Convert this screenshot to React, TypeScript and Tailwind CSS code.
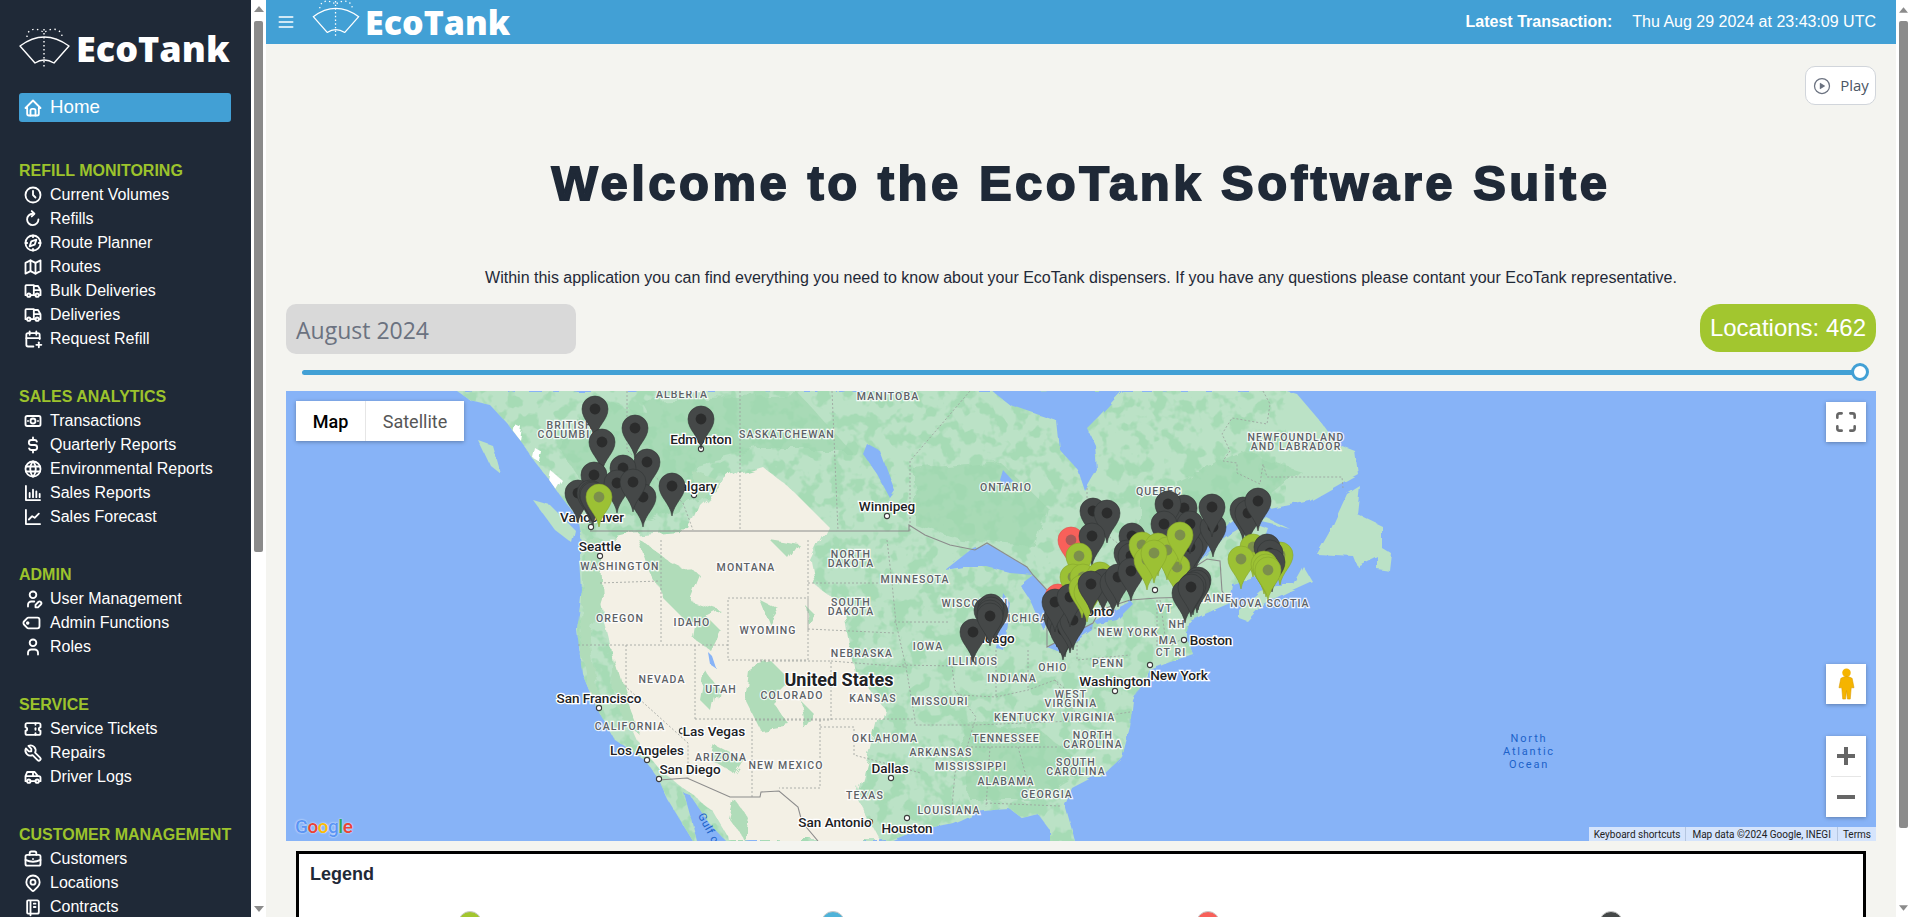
import React from 'react';
import {
  TbHome, TbClock, TbCompass, TbMap, TbTruck, TbCalendarPlus, TbCashBanknote,
  TbCurrencyDollar, TbWorld, TbUserEdit, TbTag, TbUser, TbTicket,
  TbTool, TbCar, TbBriefcase, TbMapPin, TbNotebook, TbMenu2, TbMaximize,
} from 'react-icons/tb';
import { IoPlayCircleOutline } from 'react-icons/io5';

type IconProps = { size?: number; strokeWidth?: number; className?: string };

const StrokeIcon = ({ size = 20, strokeWidth = 2, className, children }: IconProps & { children: React.ReactNode }) => (
  <svg
    viewBox="0 0 24 24"
    width={size}
    height={size}
    fill="none"
    stroke="currentColor"
    strokeWidth={strokeWidth}
    strokeLinecap="round"
    strokeLinejoin="round"
    className={className}
  >
    {children}
  </svg>
);

const RefillIcon = (props: IconProps) => (
  <StrokeIcon {...props}>
    <path d="M18.5 12.5a6.8 6.8 0 1 1-7-6.8" />
    <path d="M10.5 2.5l3.2 3.2-3.2 3.2" />
  </StrokeIcon>
);

const BarsIcon = (props: IconProps) => (
  <StrokeIcon {...props}>
    <path d="M3.5 3.5v17h17" />
    <path d="M8 17v-5M12 17V8M16 17v-7M20 17v-4" />
  </StrokeIcon>
);

const ForecastIcon = (props: IconProps) => (
  <StrokeIcon {...props}>
    <path d="M3.5 3.5v17h17" />
    <path d="M7 15l4-4 3 2 5-5" />
  </StrokeIcon>
);

const TagRightIcon = ({ className, ...props }: IconProps) => (
  <TbTag {...props} className={`-rotate-45 ${className ?? ''}`} />
);

const sections = [
  {
    title: 'REFILL MONITORING',
    items: [
      { label: 'Current Volumes', icon: TbClock },
      { label: 'Refills', icon: RefillIcon },
      { label: 'Route Planner', icon: TbCompass },
      { label: 'Routes', icon: TbMap },
      { label: 'Bulk Deliveries', icon: TbTruck },
      { label: 'Deliveries', icon: TbTruck },
      { label: 'Request Refill', icon: TbCalendarPlus },
    ],
  },
  {
    title: 'SALES ANALYTICS',
    items: [
      { label: 'Transactions', icon: TbCashBanknote },
      { label: 'Quarterly Reports', icon: TbCurrencyDollar },
      { label: 'Environmental Reports', icon: TbWorld },
      { label: 'Sales Reports', icon: BarsIcon },
      { label: 'Sales Forecast', icon: ForecastIcon },
    ],
  },
  {
    title: 'ADMIN',
    items: [
      { label: 'User Management', icon: TbUserEdit },
      { label: 'Admin Functions', icon: TagRightIcon },
      { label: 'Roles', icon: TbUser },
    ],
  },
  {
    title: 'SERVICE',
    items: [
      { label: 'Service Tickets', icon: TbTicket },
      { label: 'Repairs', icon: TbTool },
      { label: 'Driver Logs', icon: TbCar },
    ],
  },
  {
    title: 'CUSTOMER MANAGEMENT',
    items: [
      { label: 'Customers', icon: TbBriefcase },
      { label: 'Locations', icon: TbMapPin },
      { label: 'Contracts', icon: TbNotebook },
    ],
  },
];

// all map data is in page pixels, the svg viewBox starts at the map's corner
const LAND =
  'M457,391 L470,400 L490,405 L507,423 L520,440 L535,462 L547,477 L560,495 L577,517 L582,543 L580,560 L582,590 L577,630 L582,673 L596,707 L615,740 L645,760 L659,780 L668,800 L693,841 L697,841 L690,815 L684,793 L690,795 L709,823 L726,841 L890,841 L905,835 L918,830 L953,823 L960,820 L977,812 L993,810 L1010,809 L1022,818 L1038,814 L1050,830 L1050,841 L1075,841 L1072,830 L1065,805 L1072,788 L1093,777 L1101,777 L1122,757 L1130,727 L1133,700 L1150,670 L1170,662 L1193,654 L1187,640 L1187,631 L1190,621 L1207,613 L1230,603 L1233,585 L1262,575 L1275,560 L1262,545 L1268,528 L1250,522 L1225,537 L1190,570 L1185,575 L1220,530 L1250,510 L1270,509 L1310,501 L1340,484 L1358,474 L1355,451 L1337,444 L1320,421 L1297,394 L1287,391 Z';

const islands = [
  '1239,618 1247,621 1263,604 1290,591 1312,581 1303,566 1293,584 1283,584 1260,591 1239,610',
  '1360,486 1347,494 1330,531 1317,554 1353,556 1357,566 1377,556 1377,569 1390,571 1392,554 1382,548 1382,526 1357,514',
  '1267,518 1290,529 1275,525 1262,522',
  '533,500 550,505 575,530 572,543 555,530',
  '478,440 492,445 500,473 490,465',
];

const lakes = [
  '992,391 1010,405 1057,421 1060,450 1078,470 1085,491 1097,470 1095,445 1087,428 1100,415 1122,391',
  '867,444 880,451 895,491 890,498 877,474 863,454',
  '945,570 973,548 987,543 1027,567 1033,575 1010,573 987,567 963,567',
  '1003,593 1010,603 1003,650 995,647 1000,620',
  '1033,575 1047,590 1047,617 1043,630 1030,600 1020,585',
  '1047,647 1093,623 1092,630 1060,652',
  '1093,620 1130,600 1133,604 1117,620 1097,624',
  '708,652 712,656 716,668 710,664',
  '1003,470 1012,480 1006,488 1000,480',
];

const midGreen = [
  'M915,470 L1000,462 L1045,505 L1035,545 L960,540 L915,525 Z',
  'M590,400 L690,420 L700,500 L650,520 L600,510 L560,450 Z',
  'M640,400 L800,395 L850,450 L760,450 L680,470 Z',
  'M1140,500 L1240,450 L1300,470 L1250,510 L1180,560 L1140,560 Z',
  'M960,720 L1040,730 L1090,770 L1040,800 L970,800 Z',
];

const beige =
  'M590,545 L630,535 L690,530 L700,505 L737,471 L760,464 L793,491 L827,525 L810,560 L815,585 L845,607 L850,640 L856,673 L883,707 L870,757 L858,800 L880,841 L730,841 L712,810 L686,790 L660,770 L640,745 L620,700 L610,640 L600,600 Z';

const beigePatches = [
  '585,540 600,540 603,600 590,640 600,700 588,690 580,640',
  '640,540 668,560 700,575 690,600 720,610 690,625 665,600 650,570',
  '750,665 770,660 790,680 770,700 790,725 760,730 745,700',
  '700,610 720,630 710,650 695,640',
  '705,670 720,690 715,715 700,700',
  '715,745 745,760 735,775 710,760',
  '615,660 630,710 640,735 622,720 610,680',
  '805,605 815,615 808,625',
  '735,800 750,820 745,841 730,820',
  '770,540 800,545 790,560',
  '760,600 780,610 770,625',
  '800,700 815,715 805,730',
  '690,470 720,480 700,500',
];

const countryLines = [
  '590,531 909,531 909,525 925,535 950,545 975,550 987,543 1027,567 1033,575 1047,590 1047,617 1047,647 1093,623 1100,610 1130,600 1157,598 1193,597 1193,568 1207,559 1220,561 1222,591 1230,601',
  '659,780 687,778 730,797 760,797 761,792 779,791 798,807 802,822 818,841',
];

const stateLines = [
  '600,583 660,581', '578,645 728,645', '661,540 661,643', '728,598 808,598 808,660 728,660 728,598',
  '808,540 808,630', '808,583 892,583', '808,629 894,633', '831,661 906,667', '695,645 695,720',
  '752,661 831,661 831,720 752,720 752,797', '820,720 820,788 779,788', '695,719 915,719',
  '820,727 854,727 854,755 921,773', '626,645 626,687 688,743 688,778', '894,622 950,622', '902,665 952,666',
  '887,540 892,583 896,623 906,667 915,720 915,725 975,725 1100,720', '967,747 1059,747',
  '952,666 955,690 976,717 967,747 955,773 952,807', '996,650 996,697', '1028,650 1028,690', '990,747 986,807',
  '1018,747 1032,797', '986,803 1060,806', '960,695 996,697 1028,690 1055,680 1090,710',
  '1077,633 1077,660 1130,655', '1090,628 1150,628', '1160,600 1165,635', '1157,600 1157,655 1180,640',
  '740,391 740,531', '832,391 838,531', '910,531 910,461 970,391', '627,391 627,450 683,503 693,530', '1087,488 1087,520 1140,560',
  '1263,391 1270,404 1267,424 1232,418 1222,434 1230,451 1223,461 1237,463 1237,473 1260,484 1263,464 1267,477 1342,477 1343,488',
  '1100,740 1060,747', '1055,680 1080,720 1130,712',
];

type MapLabel = [string, number, number];

const regionLabels: MapLabel[] = [
  ['ALBERTA', 682, 398], ['MANITOBA', 888, 400], ['SASKATCHEWAN', 787, 438], ['ONTARIO', 1006, 491], ['QUEBEC', 1159, 495],
  ['NEWFOUNDLAND', 1296, 441], ['AND LABRADOR', 1296, 450], ['NOVA SCOTIA', 1270, 607], ['MAINE', 1213, 602], ['VT', 1165, 612],
  ['NH', 1177, 628], ['MA', 1168, 644], ['CT RI', 1171, 656], ['NEW YORK', 1128, 636], ['PENN', 1108, 667], ['OHIO', 1053, 671],
  ['INDIANA', 1012, 682], ['ILLINOIS', 973, 665], ['IOWA', 928, 650], ['WISCONSIN', 975, 607], ['MICHIGAN', 1027, 622],
  ['MINNESOTA', 915, 583], ['NORTH', 851, 558], ['DAKOTA', 851, 567], ['SOUTH', 851, 606], ['DAKOTA', 851, 615],
  ['NEBRASKA', 862, 657], ['KANSAS', 873, 702], ['MISSOURI', 940, 705], ['OKLAHOMA', 885, 742], ['ARKANSAS', 941, 756],
  ['MISSISSIPPI', 971, 770], ['TENNESSEE', 1006, 742], ['KENTUCKY', 1025, 721], ['WEST', 1071, 698], ['VIRGINIA', 1071, 707],
  ['VIRGINIA', 1089, 721], ['NORTH', 1093, 739], ['CAROLINA', 1093, 748], ['SOUTH', 1076, 766], ['CAROLINA', 1076, 775],
  ['GEORGIA', 1047, 798], ['ALABAMA', 1006, 785], ['LOUISIANA', 949, 814], ['TEXAS', 865, 799], ['NEW MEXICO', 786, 769],
  ['ARIZONA', 721, 761], ['UTAH', 721, 693], ['COLORADO', 792, 699], ['WYOMING', 768, 634], ['IDAHO', 692, 626],
  ['MONTANA', 746, 571], ['NEVADA', 662, 683], ['OREGON', 620, 622], ['WASHINGTON', 620, 570], ['CALIFORNIA', 630, 730],
  ['BRITISH', 570, 429], ['COLUMBIA', 568, 438],
];

const cityLabels: MapLabel[] = [
  ['Seattle', 600, 551], ['Vancouver', 592, 522], ['Edmonton', 701, 444], ['Calgary', 694, 491], ['Winnipeg', 887, 511],
  ['Toronto', 1090, 616], ['Chicago', 990, 643], ['Boston', 1211, 645], ['New York', 1179, 680], ['Washington', 1115, 686],
  ['San Francisco', 599, 703], ['Las Vegas', 714, 736], ['Los Angeles', 647, 755], ['San Diego', 690, 774], ['Dallas', 890, 773],
  ['San Antonio', 835, 827], ['Houston', 907, 833],
];

const cityDots = [
  [600, 556], [591, 527], [701, 449], [694, 495], [887, 516], [1184, 640], [1150, 665], [1115, 691], [1155, 590], [599, 708],
  [682, 731], [647, 760], [659, 779], [891, 778], [870, 822], [907, 818],
];

const pinColors = {
  d: { body: '#454848', hole: '#2b2c2c', line: '#333535' },
  g: { body: '#9cc134', hole: '#7c8f4c', line: '#86a62c' },
  r: { body: '#f8605a', hole: '#a85a58', line: '#e0514c' },
};

type PinKind = keyof typeof pinColors;

// x, y of the dot in the pin's head
const pins: [PinKind, number, number][] = [
  ['d', 595, 409], ['d', 635, 428], ['d', 701, 419], ['d', 602, 442], ['d', 647, 462], ['d', 594, 475], ['d', 623, 468],
  ['d', 617, 483], ['d', 643, 497], ['d', 633, 482], ['d', 672, 486], ['d', 578, 493], ['d', 590, 493], ['d', 592, 494],
  ['d', 593, 495], ['g', 599, 497],
  ['d', 973, 632], ['d', 987, 610], ['d', 995, 612], ['d', 991, 607], ['d', 991, 610], ['d', 990, 613], ['d', 990, 616],
  ['r', 1071, 540], ['d', 1093, 511], ['d', 1107, 513], ['d', 1092, 536], ['r', 1058, 597], ['g', 1079, 556], ['g', 1073, 577],
  ['g', 1083, 577], ['g', 1100, 575], ['d', 1057, 617], ['d', 1060, 623], ['d', 1065, 627], ['d', 1063, 630], ['d', 1070, 623],
  ['d', 1073, 620], ['d', 1055, 602], ['d', 1070, 597], ['g', 1082, 588], ['g', 1087, 592], ['d', 1103, 582], ['d', 1091, 584],
  ['d', 1132, 536], ['d', 1127, 553], ['d', 1113, 583], ['d', 1118, 577], ['d', 1131, 556], ['d', 1131, 571],
  ['d', 1184, 508], ['d', 1168, 504], ['d', 1195, 542], ['d', 1190, 547], ['d', 1190, 524], ['d', 1164, 524], ['d', 1213, 527],
  ['d', 1212, 507], ['g', 1142, 545], ['g', 1177, 567], ['g', 1158, 546], ['g', 1167, 550], ['g', 1147, 560], ['g', 1154, 553],
  ['g', 1180, 535], ['d', 1198, 580], ['d', 1197, 583], ['d', 1193, 585], ['d', 1185, 593], ['d', 1191, 587],
  ['d', 1243, 510], ['d', 1248, 513], ['d', 1258, 501], ['g', 1253, 547], ['g', 1280, 555], ['d', 1267, 547], ['d', 1270, 553],
  ['g', 1241, 559], ['d', 1272, 562], ['g', 1264, 564], ['g', 1266, 567], ['g', 1268, 570],
];

const Logo = ({ className }: { className: string }) => (
  <svg viewBox="19 28 51 41" className={className} fill="none" stroke="white">
    <path d="M20,46 Q44,28 69,46 L54,63 Q44,57 35,63 Z" strokeWidth="1.4" strokeLinejoin="round" />
    <path d="M44,29 L44,69" strokeWidth="1.4" strokeDasharray="1.6 2.4" />
    <path d="M27,37 C27,28 38,27 44,33 C50,27 62,28 62,37" strokeWidth="1.4" strokeDasharray="1.4 3.4" />
  </svg>
);

const ScrollArrow = ({ down = false }: { down?: boolean }) => (
  <svg viewBox="0 0 10 6" className="w-[10px] h-[6px]" fill="#8b8b8b">
    <path d={down ? 'M0,0 L10,0 L5,6 Z' : 'M5,0 L10,6 L0,6 Z'} />
  </svg>
);

const MapCanvas = () => (
  <svg viewBox="286 391 1590 450" className="absolute inset-0 w-full h-full">
    <defs>
      <filter id="noisePatch" x="0" y="0" width="100%" height="100%">
        <feTurbulence type="fractalNoise" baseFrequency="0.065" numOctaves="3" seed="4" result="n" />
        <feColorMatrix in="n" type="matrix" values="0 0 0 0 0  0 0 0 0 0  0 0 0 0 0  0 0 0 9 -4.4" result="m" />
        <feComposite in="SourceGraphic" in2="m" operator="in" />
      </filter>
      <filter id="wobble" x="-5%" y="-5%" width="110%" height="110%">
        <feTurbulence type="fractalNoise" baseFrequency="0.05" numOctaves="3" seed="7" result="n" />
        <feDisplacementMap in="SourceGraphic" in2="n" scale="14" />
      </filter>
      <filter id="wobbleSmall" x="-5%" y="-5%" width="110%" height="110%">
        <feTurbulence type="fractalNoise" baseFrequency="0.08" numOctaves="2" seed="3" result="n" />
        <feDisplacementMap in="SourceGraphic" in2="n" scale="5" />
      </filter>
      <clipPath id="landClip">
        <path d={LAND} />
      </clipPath>
    </defs>
    <rect x="286" y="391" width="1590" height="450" fill="#87b3f7" />
    <g fill="#bbe2c6" filter="url(#wobbleSmall)">
      <path d={LAND} />
      {islands.map((p) => (
        <polygon key={p} points={p} />
      ))}
    </g>
    <g clipPath="url(#landClip)">
      <rect x="286" y="391" width="1000" height="450" fill="#a6dbb5" filter="url(#noisePatch)" />
      <g fill="#a0d7af" filter="url(#wobble)" opacity="0.7">
        {midGreen.map((d) => (
          <path key={d} d={d} />
        ))}
      </g>
      <path d={beige} fill="#f3f0e5" filter="url(#wobble)" />
      <g fill="#b0dcb9" filter="url(#wobble)">
        {beigePatches.map((p) => (
          <polygon key={p} points={p} />
        ))}
      </g>
      <g fill="#ffffff" filter="url(#wobbleSmall)">
        <polygon points="515,425 522,428 520,440 513,434" />
        <polygon points="535,448 542,452 540,462 533,458" />
        <polygon points="550,470 562,480 556,490 548,480" />
      </g>
    </g>
    <g fill="#87b3f7" filter="url(#wobbleSmall)">
      {lakes.map((p) => (
        <polygon key={p} points={p} />
      ))}
    </g>
    <g fill="none" stroke="#9a9f9c" strokeWidth="0.8" strokeDasharray="2 2">
      {stateLines.map((p) => (
        <polyline key={p} points={p} />
      ))}
    </g>
    <g fill="none" stroke="#8c8c8c" strokeWidth="1.1">
      {countryLines.map((p) => (
        <polyline key={p} points={p} />
      ))}
    </g>
    <g
      fontFamily="Roboto, sans-serif"
      fontSize="10.5"
      fontWeight="500"
      letterSpacing="1.1"
      textAnchor="middle"
      fill="#5c6166"
      stroke="#ffffff"
      strokeOpacity="0.85"
      strokeWidth="2.4"
      className="[paint-order:stroke]"
    >
      {regionLabels.map(([t, x, y], i) => (
        <text key={i} x={x} y={y}>{t}</text>
      ))}
    </g>
    <g fill="#ffffff" stroke="#3c3c3c" strokeWidth="1.1">
      {cityDots.map(([x, y]) => (
        <circle key={`${x}-${y}`} cx={x} cy={y} r="2.6" />
      ))}
    </g>
    <g
      fontFamily="Roboto, sans-serif"
      fontSize="13.5"
      fontWeight="500"
      textAnchor="middle"
      fill="#202124"
      stroke="#ffffff"
      strokeWidth="2.6"
      className="[paint-order:stroke]"
    >
      {cityLabels.map(([t, x, y]) => (
        <text key={t} x={x} y={y}>{t}</text>
      ))}
      <text x="839" y="686" fontSize="18" fontWeight="700">United States</text>
    </g>
    <g fontFamily="Roboto, sans-serif" fontSize="11" letterSpacing="1.8" textAnchor="middle" fill="#1c62c9">
      <text x="1529" y="742">North</text>
      <text x="1529" y="755">Atlantic</text>
      <text x="1529" y="768">Ocean</text>
      <text x="710" y="834" transform="rotate(62 710 830)" letterSpacing="0.6">Gulf of</text>
    </g>
    {pins.map(([kind, x, y], i) => {
      const c = pinColors[kind];
      const tip = y + 30;
      return (
        <g key={i}>
          <path
            d={`M${x},${tip} C${x - 2},${tip - 13} ${x - 13},${tip - 19} ${x - 13},${y} A13,13 0 1 1 ${x + 13},${y} C${x + 13},${tip - 19} ${x + 2},${tip - 13} ${x},${tip} Z`}
            fill={c.body}
            stroke={c.line}
            strokeWidth="0.6"
          />
          <circle cx={x} cy={y} r="5.4" fill={c.hole} />
        </g>
      );
    })}
  </svg>
);

const MapPanel = () => (
  <div className="relative h-[450px] mt-[10px] overflow-hidden bg-[#87b3f7] font-['Roboto',sans-serif]">
    <MapCanvas />
    <div className="absolute left-[10px] top-[10px] flex h-10 w-[168px] bg-white text-[18px] shadow-[0_1px_4px_rgba(0,0,0,0.3)]">
      <div className="flex w-[70px] items-center justify-center font-medium text-black border-r border-[#e6e6e6]">Map</div>
      <div className="flex flex-1 items-center justify-center text-[#565656]">Satellite</div>
    </div>
    <div className="absolute right-[10px] top-[11px] flex h-10 w-10 items-center justify-center bg-white shadow-[0_1px_4px_rgba(0,0,0,0.3)]">
      <TbMaximize size={26} color="#666666" strokeWidth={2.4} />
    </div>
    <div className="absolute right-[10px] top-[273px] flex h-10 w-10 items-center justify-center bg-white shadow-[0_1px_4px_rgba(0,0,0,0.3)]">
      <svg viewBox="0 0 20 34" className="h-[32px] w-[19px]">
        <circle cx="10" cy="5" r="4.5" fill="#f5b400" />
        <path d="M4,11 Q10,7 16,11 L18,21 L15,21 L14,33 L11,33 L10,24 L9,33 L6,33 L5,21 L2,21 Z" fill="#f5b400" stroke="#d99a00" strokeWidth="0.6" />
      </svg>
    </div>
    <div className="absolute right-[10px] top-[345px] flex w-10 flex-col items-center bg-white shadow-[0_1px_4px_rgba(0,0,0,0.3)]">
      <div className="relative h-10 w-10">
        <span className="absolute left-[11px] top-[18px] h-1 w-[18px] bg-[#666666]" />
        <span className="absolute left-[18px] top-[11px] h-[18px] w-1 bg-[#666666]" />
      </div>
      <div className="h-px w-[30px] bg-[#e6e6e6]" />
      <div className="relative h-10 w-10">
        <span className="absolute left-[11px] top-[18px] h-1 w-[18px] bg-[#666666]" />
      </div>
    </div>
    <div className="absolute left-[9px] bottom-[4px] text-[19px] leading-[20px] font-medium tracking-[-0.5px] [text-shadow:0_0_2px_white]">
      <span className="text-[#5a95f5]">G</span>
      <span className="text-[#ea4335]">o</span>
      <span className="text-[#fbbc05]">o</span>
      <span className="text-[#5a95f5]">g</span>
      <span className="text-[#34a853]">l</span>
      <span className="text-[#ea4335]">e</span>
    </div>
    <div className="absolute right-0 bottom-0 flex h-[14px] items-center bg-white/65 text-[10px] text-[#222222]">
      <span className="px-[5px] border-r border-[#b5c6e0]">Keyboard shortcuts</span>
      <span className="px-[6px] border-r border-[#b5c6e0]">Map data ©2024 Google, INEGI</span>
      <span className="px-[5px]">Terms</span>
    </div>
  </div>
);

const App = () => {
  return (
    <div className="flex h-screen overflow-hidden bg-white font-['Liberation_Sans',Arial,sans-serif]">
      <aside className="w-[251px] shrink-0 overflow-hidden bg-[#1f2937] pl-[19px] pr-[20px] pt-[28px] text-white">
        <div className="flex h-[41px] items-center gap-[6px]">
          <Logo className="h-[41px] w-[51px] shrink-0" />
          <span className="font-['Open_Sans',sans-serif] text-[36px] leading-none font-extrabold whitespace-nowrap">EcoTank</span>
        </div>
        <div className="mt-[24px] flex h-[29px] items-center rounded-[3px] bg-[#42a0d5] pl-[4px] text-[18.72px]">
          <TbHome size={20} strokeWidth={2.2} className="mr-[7px]" />
          Home
        </div>
        <div className="mt-[37px]">
          {sections.map((section) => (
            <div key={section.title} className="mb-[34px]">
              <div className="h-6 text-[16px] leading-6 font-bold whitespace-nowrap text-[#9cc32c]">{section.title}</div>
              {section.items.map(({ label, icon: Icon }) => (
                <div key={label} className="flex h-6 items-center pl-[4px] text-[16px]">
                  <Icon size={20} strokeWidth={2.2} className="mr-[7px] shrink-0" />
                  {label}
                </div>
              ))}
            </div>
          ))}
        </div>
      </aside>
      <div className="flex w-[15px] shrink-0 flex-col items-center bg-white pt-[6px]">
        <ScrollArrow />
        <div className="mt-[9px] h-[531px] w-[9px] rounded-[2px] bg-[#8b8b8b]" />
        <div className="flex-1" />
        <div className="mb-[5px]">
          <ScrollArrow down />
        </div>
      </div>

      <main className="min-w-0 flex-1 bg-[#f4f4f0]">
        <header className="flex h-11 items-center bg-[#42a0d5] pr-5 pl-[10px] text-[16px] text-white">
          <TbMenu2 size={20} strokeWidth={2} />
          <Logo className="ml-[16px] h-[38px] w-[48px] self-start" />
          <span className="ml-[5px] font-['Open_Sans',sans-serif] text-[34px] leading-none font-extrabold">EcoTank</span>
          <span className="ml-auto font-bold">Latest Transaction:</span>
          <span className="ml-5">Thu Aug 29 2024 at 23:43:09 UTC</span>
        </header>

        <section className="px-5 pt-[22px]">
          <div className="flex justify-end">
            <button className="flex h-[39px] w-[71px] items-center justify-center gap-[8px] rounded-[10px] border border-[#d1d5db] bg-white font-['Open_Sans',sans-serif] text-[15px] text-[#4b5563]">
              <IoPlayCircleOutline size={20} className="text-[#6b7280]" />
              Play
            </button>
          </div>
          <h1 className="mt-[49px] text-center text-[49px] leading-[58px] font-bold tracking-[3.5px] text-[#1f2937] [-webkit-text-stroke:1.8px_#1f2937]">
            Welcome to the EcoTank Software Suite
          </h1>
          <p className="mt-[54px] text-center text-[16px] leading-6 text-[#1f2937]">
            Within this application you can find everything you need to know about your EcoTank dispensers. If you have any questions please contant your EcoTank representative.
          </p>
          <div className="mt-[14px] flex h-[50px] items-start justify-between">
            <div className="flex h-[50px] w-[290px] items-center rounded-[10px] bg-[#d9d9d9] pl-[10px] pt-[2px] font-['Open_Sans',sans-serif] text-[23px] text-[#6b7280]">
              August 2024
            </div>
            <div className="flex h-[48px] items-center rounded-[20px] bg-[#a2c62f] px-[10px] text-[24px] text-white">
              Locations: 462
            </div>
          </div>
          <div className="mt-[9px] flex h-[18px] items-center pl-4 pr-[7px]">
            <div className="h-[5px] flex-1 rounded-l-full bg-[#42a0d5]" />
            <div className="-ml-px h-[18px] w-[18px] shrink-0 rounded-full border-[3px] border-[#42a0d5] bg-white" />
          </div>
          <MapPanel />
          <div className="mx-[10px] mt-[10px] h-[120px] border-[3px] border-black bg-white pl-[11px] pt-[8px]">
            <div className="text-[18px] leading-[24px] font-bold text-[#1f2937]">Legend</div>
            <div className="relative mt-[25px] h-6">
              <span className="absolute left-[148px] top-0 h-6 w-6 rounded-full border border-[#c9c9c9] bg-[#a2c62f]" />
              <span className="absolute left-[511px] top-0 h-6 w-6 rounded-full border border-[#c9c9c9] bg-[#4fb3d9]" />
              <span className="absolute left-[886px] top-0 h-6 w-6 rounded-full border border-[#c9c9c9] bg-[#f8605a]" />
              <span className="absolute left-[1289px] top-0 h-6 w-6 rounded-full border border-[#c9c9c9] bg-[#454848]" />
            </div>
          </div>
        </section>
      </main>

      <div className="flex w-3 shrink-0 flex-col items-end bg-white pt-[7px]">
        <div className="flex w-[9px] justify-center">
          <ScrollArrow />
        </div>
        <div className="mt-[8px] h-[807px] w-[9px] rounded-[2px] bg-[#8b8b8b]" />
        <div className="flex-1" />
        <div className="mb-[6px] flex w-[9px] justify-center">
          <ScrollArrow down />
        </div>
      </div>
    </div>
  );
};

export default App;
